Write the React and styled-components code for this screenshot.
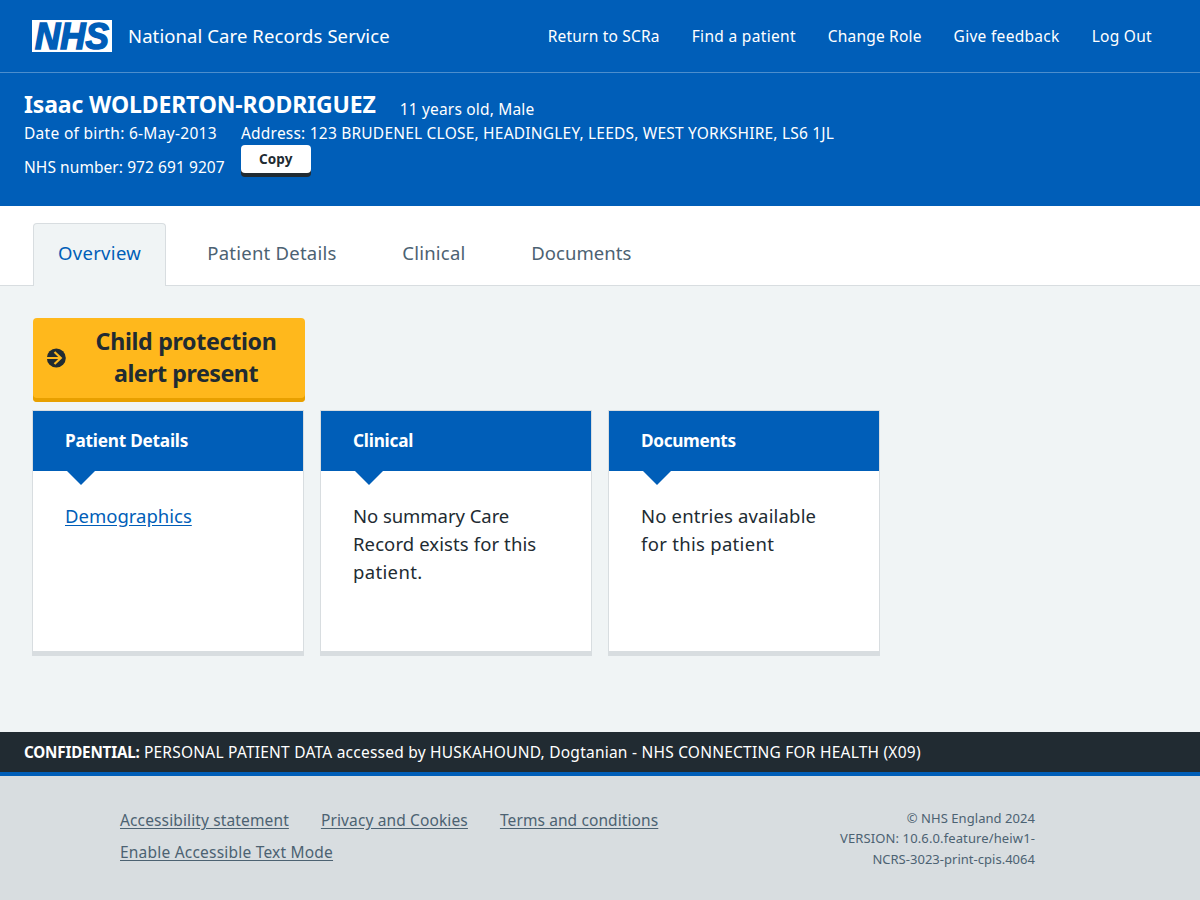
import React from "react";
import styled, { createGlobalStyle } from "styled-components";

const GlobalStyle = createGlobalStyle`
  *, *::before, *::after { box-sizing: border-box; }
  body {
    margin: 0;
    background: #d8dde0;
    color: #212b32;
    font-family: "Noto Sans", "Open Sans", sans-serif;
    font-size: 16px;
    line-height: 24px;
  }
  p, h1, h2 { margin: 0; }
`;

const T = styled.span`
  white-space: nowrap;
  letter-spacing: ${(p) => p.$track || 0}px;
`;

const Line = styled(T)`
  display: block;
`;

const Page = styled.div`
  display: flex;
  flex-direction: column;
  height: 900px;
  overflow: hidden;
`;

const Header = styled.header`
  display: flex;
  align-items: center;
  height: 73px;
  flex: none;
  padding: 0 48px 0 32px;
  background: #005eb8;
  border-bottom: 1px solid #4c8ecd;
  color: #fff;
`;

const Logo = styled.svg`
  display: block;
  width: 80px;
  height: 32px;
  overflow: visible;
`;

const ServiceName = styled.span`
  margin-left: 16px;
  font-size: 18.5px;
`;

const Nav = styled.nav`
  display: flex;
  gap: 32px;
  margin-left: auto;
`;

const NavLink = styled.a`
  color: #fff;
  font-size: 15.5px;
`;

const Banner = styled.section`
  flex: none;
  height: 133px;
  padding: 16px 24px 0;
  background: #005eb8;
  color: #fff;
  font-size: 15.5px;
`;

const NameRow = styled.div`
  display: flex;
  align-items: flex-start;
  gap: 24px;
  height: 32px;
`;

const PatientName = styled.h1`
  font-size: 23px;
  line-height: 30px;
  font-weight: 700;
`;

const AgeAndSex = styled.p`
  padding-top: 8px;
`;

const DetailColumns = styled.div`
  display: grid;
  grid-template-columns: 201px auto;
  justify-content: start;
  column-gap: 16px;
`;

const DetailColumn = styled.div`
  display: flex;
  flex-direction: column;
  align-items: flex-start;
  gap: ${(p) => p.$gap}px;
`;

const CopyButton = styled.button`
  width: 69.5px;
  height: 28px;
  border: 0;
  border-radius: 4px;
  padding: 0;
  background: #fff;
  box-shadow: 0 4px 0 #212b32;
  color: #212b32;
  font: 700 13.5px/28px "Noto Sans", "Open Sans", sans-serif;
`;

const Tabs = styled.nav`
  display: flex;
  align-items: flex-end;
  flex: none;
  height: 80px;
  padding-left: 33px;
  background: #fff;
  box-shadow: inset 0 -1px 0 #d8dde0;
`;

const Tab = styled.a`
  height: 63px;
  width: ${(p) => p.$width}px;
  border: 1px solid ${(p) => (p.$active ? "#d8dde0" : "transparent")};
  border-bottom: 0;
  border-radius: 4px 4px 0 0;
  padding-left: 24px;
  margin-right: ${(p) => (p.$active ? 16.3 : 0)}px;
  background: ${(p) => (p.$active ? "#f0f4f5" : "none")};
  color: ${(p) => (p.$active ? "#005eb8" : "#4c6272")};
  font-size: 18.5px;
  line-height: 58px;
`;

const Main = styled.main`
  flex: none;
  height: 446px;
  padding: 32px;
  background: #f0f4f5;
`;

const Alert = styled.a`
  display: flex;
  align-items: center;
  width: 272px;
  height: 84px;
  margin: 0 0 8px 1px;
  padding: 0 28px 0 13px;
  border-radius: 4px;
  background: #ffb81c;
  box-shadow: inset 0 -4px 0 #e8a000;
  color: #212b32;
`;

const AlertText = styled.span`
  flex: 1;
  margin: -6px 0 0 29px;
  text-align: center;
  font-size: 23.2px;
  line-height: 32px;
  font-weight: 700;
`;

const AlertIcon = styled.svg`
  display: block;
  flex: none;
  width: 20px;
  height: 20px;
  margin-top: -4px;
`;

const Cards = styled.div`
  display: grid;
  grid-template-columns: repeat(3, 272px);
  gap: 16px;
`;

const Card = styled.article`
  height: 246px;
  background: #fff;
  border: 1px solid #d8dde0;
  border-bottom-width: 5px;
`;

const CardTitle = styled.h2`
  position: relative;
  height: 60px;
  padding-left: 32px;
  background: #005eb8;
  color: #fff;
  font-size: 17.2px;
  line-height: 59px;
  font-weight: 700;

  &::after {
    content: "";
    position: absolute;
    top: 100%;
    left: 34px;
    border: 14px solid transparent;
    border-top-color: #005eb8;
    border-bottom: 0;
  }
`;

const CardBody = styled.div`
  padding: 31px 32px;
  font-size: 18.5px;
  line-height: 28px;
`;

const CardLink = styled.a`
  color: #005eb8;
  text-decoration: underline;
  text-underline-offset: 2px;
`;

const Confidential = styled.div`
  flex: none;
  height: 40px;
  padding-left: 24px;
  background: #212b32;
  color: #fff;
  font-size: 15.5px;
  line-height: 40px;
  strong {
    font-size: 15.2px;
    font-weight: 700;
    letter-spacing: -0.18px;
  }
`;

const Footer = styled.footer`
  display: flex;
  justify-content: space-between;
  flex: 1;
  padding: 28px 165px 0 120px;
  border-top: 4px solid #005eb8;
  background: #d8dde0;
  color: #4c6272;
`;

const FooterLinks = styled.div`
  display: flex;
  flex-wrap: wrap;
  align-content: flex-start;
  column-gap: 32px;
  width: 600px;
  font-size: 15.5px;
  line-height: 32px;
`;

const FooterLink = styled.a`
  text-decoration: underline;
  text-underline-offset: 1.5px;
`;

const Version = styled.div`
  margin-top: 4px;
  text-align: right;
  font-size: 13px;
  line-height: 20.4px;
`;

const NAV = [
  ["Return to SCRa", 0.2],
  ["Find a patient", 0.32],
  ["Change Role", 0.18],
  ["Give feedback", 0.3],
  ["Log Out", 0.28],
];

const TABS = [
  ["Overview", 133, 0.3],
  ["Patient Details", 195, 0.23],
  ["Clinical", 129, 0.22],
  ["Documents", 150, 0.03],
];

const FOOTER = [
  ["Accessibility statement", 0.13],
  ["Privacy and Cookies", 0.13],
  ["Terms and conditions", 0.1],
  ["Enable Accessible Text Mode", 0.21],
];

export default function App() {
  return (
    <Page>
      <GlobalStyle />
      <Header>
        <Logo viewBox="0 0 80 32" aria-label="NHS">
          <rect width="80" height="32" fill="#fff" />
          <text
            x="3"
            y="28.7"
            fill="#005eb8"
            stroke="#005eb8"
            strokeWidth="1.6"
            fontFamily="Liberation Sans, sans-serif"
            fontWeight="700"
            fontStyle="italic"
            fontSize="36"
            textLength="73.8"
            lengthAdjust="spacingAndGlyphs"
          >
            NHS
          </text>
        </Logo>
        <ServiceName>
          <T $track={0.09}>National Care Records Service</T>
        </ServiceName>
        <Nav>
          {NAV.map(([label, track]) => (
            <NavLink key={label}>
              <T $track={track}>{label}</T>
            </NavLink>
          ))}
        </Nav>
      </Header>

      <Banner>
        <NameRow>
          <PatientName>
            <T $track={-0.14}>Isaac WOLDERTON-RODRIGUEZ</T>
          </PatientName>
          <AgeAndSex>
            <T $track={0.17}>11 years old, Male</T>
          </AgeAndSex>
        </NameRow>
        <DetailColumns>
          <DetailColumn $gap={10}>
            <T $track={0.3}>Date of birth: 6-May-2013</T>
            <T $track={0.07}>NHS number: 972 691 9207</T>
          </DetailColumn>
          <DetailColumn $gap={0}>
            <T $track={0.21}>Address: 123 BRUDENEL CLOSE, HEADINGLEY, LEEDS, WEST YORKSHIRE, LS6 1JL</T>
            <CopyButton>
              <T $track={0.1}>Copy</T>
            </CopyButton>
          </DetailColumn>
        </DetailColumns>
      </Banner>

      <Tabs>
        {TABS.map(([label, width, track], i) => (
          <Tab key={label} $active={i === 0} $width={width}>
            <T $track={track}>{label}</T>
          </Tab>
        ))}
      </Tabs>

      <Main>
        <Alert>
          <AlertIcon viewBox="0 0 20 20">
            <circle cx="10.3" cy="10" r="9.5" fill="#212b32" />
            <path d="M0 10H15M8.5 4 14.8 10 8.5 16" fill="none" stroke="#ffb81c" strokeWidth="2.2" />
          </AlertIcon>
          <AlertText>
            <Line $track={-0.32}>Child protection</Line>
            <Line $track={-0.47}>alert present</Line>
          </AlertText>
        </Alert>
        <Cards>
          <Card>
            <CardTitle>
              <T $track={-0.22}>Patient Details</T>
            </CardTitle>
            <CardBody>
              <CardLink>Demographics</CardLink>
            </CardBody>
          </Card>
          <Card>
            <CardTitle>
              <T $track={-0.22}>Clinical</T>
            </CardTitle>
            <CardBody>
              <Line $track={-0.05}>No summary Care</Line>
              <Line $track={0.1}>Record exists for this</Line>
              <Line $track={0.35}>patient.</Line>
            </CardBody>
          </Card>
          <Card>
            <CardTitle>
              <T $track={-0.32}>Documents</T>
            </CardTitle>
            <CardBody>
              <Line $track={0.17}>No entries available</Line>
              <Line $track={0.3}>for this patient</Line>
            </CardBody>
          </Card>
        </Cards>
      </Main>

      <Confidential>
        <T $track={0.23}>
          <strong>CONFIDENTIAL:</strong> PERSONAL PATIENT DATA accessed by HUSKAHOUND, Dogtanian - NHS CONNECTING FOR
          HEALTH (X09)
        </T>
      </Confidential>

      <Footer>
        <FooterLinks>
          {FOOTER.map(([label, track]) => (
            <FooterLink key={label}>
              <T $track={track}>{label}</T>
            </FooterLink>
          ))}
        </FooterLinks>
        <Version>
          <Line $track={0.05}>© NHS England 2024</Line>
          <Line $track={0.12}>VERSION: 10.6.0.feature/heiw1-</Line>
          <Line $track={0.02}>NCRS-3023-print-cpis.4064</Line>
        </Version>
      </Footer>
    </Page>
  );
}
